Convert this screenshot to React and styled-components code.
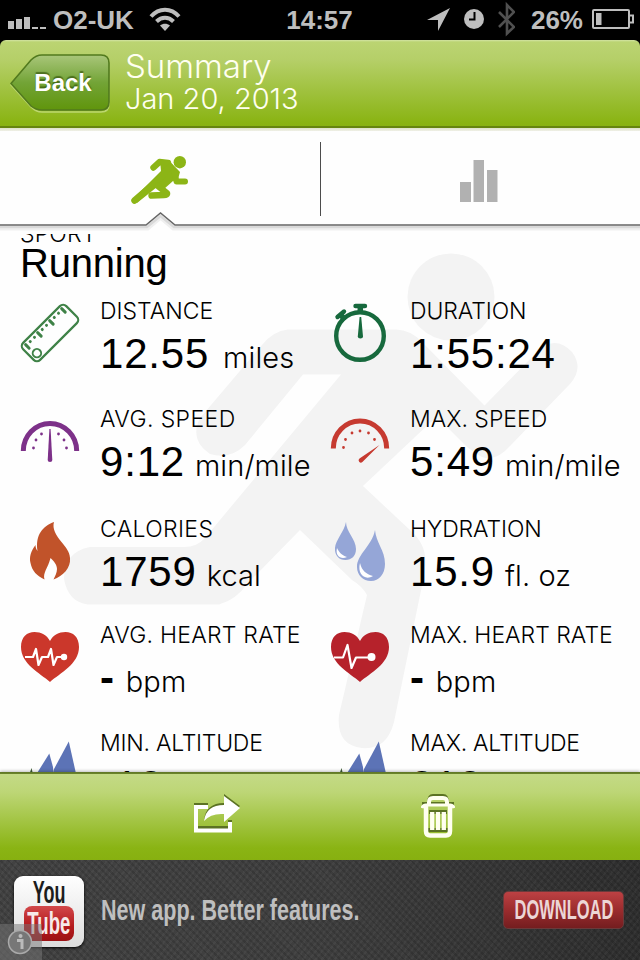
import React from 'react';
import styled, { createGlobalStyle } from 'styled-components';

const GlobalStyle = createGlobalStyle`
  * {
    box-sizing: border-box;
  }

  body {
    margin: 0;
    background: #000;
    font-family: 'Liberation Sans', Arial, sans-serif;
  }

  svg {
    display: block;
    flex: none;
  }
`;

const Screen = styled.div`
  width: 640px;
  height: 960px;
  display: flex;
  flex-direction: column;
  overflow: hidden;
  background: #000;
`;

/* Status bar */

const StatusBar = styled.div`
  height: 40px;
  flex: none;
  display: grid;
  grid-template-columns: 1fr 68px 1fr;
  padding: 0 6px 0 8px;
  color: #bebebe;
  font-size: 26px;
  font-weight: 700;
  line-height: 40px;
`;

const StatusGroup = styled.div`
  display: flex;
  align-items: center;
  white-space: nowrap;
  justify-content: ${(p) => (p.$end ? 'flex-end' : 'flex-start')};
`;

const Carrier = styled.span`
  margin: 0 15px 0 6px;
`;

const Clock = styled.span`
  margin-left: -3px;
  text-align: center;
`;

const Percent = styled.span`
  margin: 0 9px 0 16px;
`;

/* Header */

const Header = styled.header`
  height: 91px;
  flex: none;
  display: flex;
  padding: 14px 10px 0;
  border-radius: 6px 6px 0 0;
  background: linear-gradient(#d3e3a4 0, #bbd472 2px, #b5cf68 20px, #8ab414 82px, #89b213 86px, #66850f 86px, #66850f 88px, #dfe2cb 88px, #eff0e6 91px);
`;

const BackButton = styled.button`
  width: 100px;
  height: 59px;
  padding: 0;
  border: 0;
  background: none;
  display: grid;
  align-items: center;

  > * {
    grid-area: 1 / 1;
  }
`;

const BackLabel = styled.span`
  padding: 0 0 1px 6px;
  color: #fff;
  font: 700 24px 'Liberation Sans', Arial, sans-serif;
  text-shadow: 0 -2px 1px rgba(40, 70, 0, 0.6);
`;

const Heading = styled.div`
  margin-left: 15px;
  color: #fffff0;
  font-family: Inter, sans-serif;
  font-weight: 300;
  white-space: nowrap;
`;

const Title = styled.h1`
  margin: -5px 0 0;
  font-size: 33px;
  font-weight: 300;
  line-height: 34px;
`;

const DateLine = styled.div`
  font-size: 29px;
  line-height: 32px;
`;

/* Tabs */

const Tabs = styled.nav`
  position: relative;
  z-index: 1;
  height: 103px;
  flex: none;
  display: flex;
  background: #fefefe;
`;

const Tab = styled.div`
  flex: 1;
  display: flex;
  justify-content: center;
  padding-top: ${(p) => p.$top}px;
`;

const Divider = styled.div`
  width: 1px;
  height: 74px;
  margin: 11px 0 0;
  background: #4c4c4c;
`;

const TabEdge = styled.svg`
  position: absolute;
  left: 0;
  top: 78px;
`;

/* Summary */

const Content = styled.main`
  position: relative;
  height: 538px;
  flex: none;
  overflow: hidden;
  background: #fefefe;
  color: #000;
`;

const Watermark = styled.svg`
  position: absolute;
  left: 0;
  top: 0;
`;

const Scroller = styled.div`
  position: relative;
  margin-top: -9px;
`;

const Label = styled.div`
  font-family: Inter, sans-serif;
  font-size: 23px;
  font-weight: 300;
  line-height: 18px;
  letter-spacing: ${(p) => p.$track}px;
  white-space: nowrap;
`;

const Sport = styled.section`
  height: 77px;
  padding-left: 20px;
`;

const SportName = styled.div`
  margin-top: 8px;
  font-size: 40px;
  line-height: 24px;
  letter-spacing: -0.2px;
`;

const Metrics = styled.section`
  display: grid;
  grid-template-columns: 310px 310px;
  grid-template-rows: 108px 110px 106px 108px 108px;
  padding-left: 20px;
`;

const Metric = styled.div`
  display: grid;
  grid-template-columns: 60px 1fr;
  column-gap: 20px;
  align-content: start;
`;

const Value = styled.div`
  margin-top: 9px;
  font-size: 42px;
  font-weight: ${(p) => (p.$empty ? 700 : 400)};
  line-height: 50px;
  letter-spacing: 0.8px;
  white-space: nowrap;
`;

const Unit = styled.span`
  margin-left: ${(p) => p.$gap}px;
  font-family: Inter, sans-serif;
  font-size: 29px;
  font-weight: 300;
  line-height: 1;
  letter-spacing: 0.1px;
`;

/* Bottom */

const Toolbar = styled.footer`
  position: relative;
  height: 88px;
  flex: none;
  display: flex;
  padding-top: 21px;
  background: linear-gradient(#5f7526 0, #6c862b 2px, #c4da86 2px, #bdd676 20px, #8ab414 76px, #87b010 88px);
  box-shadow: 0 -1px 3px rgba(0, 0, 0, 0.25);
`;

const ToolButton = styled.div`
  padding-left: ${(p) => p.$left}px;
`;

const Banner = styled.aside`
  position: relative;
  flex: 1;
  display: flex;
  align-items: center;
  padding: 0 16px 0 14px;
  background:
    repeating-linear-gradient(45deg, rgba(0, 0, 0, 0.12) 0 2px, transparent 2px 5px),
    repeating-linear-gradient(-52deg, rgba(255, 255, 255, 0.035) 0 2px, transparent 2px 5px),
    linear-gradient(90deg, #424242, #3e3e3e 50%, #2e2e2e);
`;

const YouTube = styled.div`
  width: 70px;
  height: 71px;
  margin-top: 3px;
  display: flex;
  flex-direction: column;
  align-items: center;
  border-radius: 9px;
  background: linear-gradient(#fff, #dcdcdc);
  box-shadow: 0 1px 3px #000;
  color: #1c1c1c;
`;

const Narrow = styled.span`
  display: block;
  font-weight: 700;
  white-space: nowrap;
  font-size: ${(p) => p.$size}px;
  transform: scaleX(${(p) => p.$x});
  transform-origin: ${(p) => p.$origin || 'center'};
`;

const You = styled.div`
  height: 30px;
  line-height: 33px;
`;

const Tube = styled.div`
  width: 50px;
  height: 35px;
  border-radius: 8px;
  background: linear-gradient(#d2484a, #b3191c 60%, #9c1214);
  color: #f6e9e9;
  line-height: 35px;
  display: flex;
  justify-content: center;
`;

const AdText = styled.div`
  width: 402px;
  margin-left: 17px;
  color: #bfbfbf;
`;

const Download = styled.div`
  width: 121px;
  height: 38px;
  display: flex;
  align-items: center;
  justify-content: center;
  border: 1px solid #6b3a3b;
  border-radius: 5px;
  background: linear-gradient(#bd4143, #9b2c2e 50%, #741d1f);
  color: #ecd6d6;
`;

const InfoBadge = styled.div`
  position: absolute;
  left: 0;
  bottom: 0;
  width: 42px;
  height: 36px;
  display: flex;
  align-items: center;
  padding-left: 7px;
  background: rgba(120, 120, 120, 0.5);
`;

const RulerIcon = () => (
  <svg width="60" height="62" viewBox="0 0 60 62" fill="none" stroke="#3f8247">
    <g transform="translate(30 31) rotate(-45)">
      <rect x="-30.500" y="-12" width="61" height="24" rx="4.500" strokeWidth="2.200" />
      <path d="M-25.500 -9v5M-8.500 -9v5M8.500 -9v5M25.500 -9v5" strokeWidth="3" strokeLinecap="round" />
      <path d="M-20 -8v.1M-14 -8v.1M-3 -8v.1M3 -8v.1M14 -8v.1M20 -8v.1" strokeWidth="3" strokeLinecap="round" />
      <circle cx="-23.500" cy="5" r="4.200" strokeWidth="2" />
    </g>
  </svg>
);

const StopwatchIcon = () => (
  <svg width="60" height="62" viewBox="0 0 60 62" fill="none" stroke="#17693d">
    <circle cx="30" cy="34" r="23.800" strokeWidth="4.400" />
    <path d="M25.500 4h9.500M7.500 15L14 9.500" strokeWidth="4.400" strokeLinecap="round" />
    <path d="M30.300 5v6M11 13l4 5" strokeWidth="5.500" />
    <path d="M29.600 15h1.600L33 34.500a2.600 2 0 0 1-5.200 0z" fill="#17693d" stroke="none" />
  </svg>
);

const GaugeIcon = ({ color, y, max }) => (
  <svg width="60" height="62" viewBox="0 0 60 62">
    <g transform={`translate(30 ${y})`}>
      <path d="M-26.700 0a26.700 27.500 0 0 1 53.400 0" fill="none" stroke={color} strokeWidth="5" />
      <path
        d={
          max
            ? 'M-16.500 -1v.1M-14.500 -9v.1M-8 -15.500v.1M0 -17.500v.1M8.500 -15.500v.1M14.500 -9v.1'
            : 'M-16.500 -3v.1M-14 -11v.1M-8.500 -17v.1M8.500 -17v.1M14 -11v.1M16.500 -3v.1'
        }
        stroke={color}
        strokeWidth="2.800"
        strokeLinecap="round"
      />
      {max ? (
        <path d="M19.500 -3.500L-.5 10a2.300 2.300 0 0 0 2.900 3.600z" fill={color} />
      ) : (
        <path d="M-.6 -22h1.200L2.300 9a2.300 2 0 0 1-4.600 0z" fill={color} />
      )}
    </g>
  </svg>
);

const FlameIcon = () => (
  <svg width="60" height="62" viewBox="0 0 60 62">
    <path
      d="M34 2C23 6 15 15 17.500 31C16 29 15.500 27 15.500 25C11 31 9 37 10.500 43C12 51 17 56 24.500 59.500C22.500 53 28 48 30.500 38C34 41 37 45 37 49C37 53 35 56 33.500 59.500C43 56 51 48 50 38C49.500 31 46 28 41.500 22C36 15 32 9 34 2z"
      fill="#c1532a"
    />
  </svg>
);

const DropsIcon = () => (
  <svg width="60" height="62" viewBox="0 0 60 62">
    <path d="M16 2C16 12 26 19 26 29C26 36 21.500 40 15.500 40C9 40 4.500 35.500 5 28C5.500 20 14 12 16 2z" fill="#95a6d7" />
    <path d="M45 10C46 23 55 30 55 44C55 54 49 61 41 61C33 61 27 55 27 47C27 34 42 26 45 10z" fill="#95a6d7" />
    <path d="M7 28C9 32 11 35 17 37C11 40 5 36 7 28zM30 43C32 51 36 54 43 56C35 61 27 54 30 43z" fill="#fff" />
  </svg>
);

const HeartIcon = ({ color, max }) => (
  <svg width="60" height="62" viewBox="0 0 60 62">
    <path
      d="M30 56C20 47 1 38 1 21C1 11 7 6 14.500 6C21 6 27 9 30 15C33 9 39 6 45.500 6C53 6 59 11 59 21C59 38 40 47 30 56z"
      fill={color}
    />
    <path
      d={max ? 'M4 31.500H13L17.500 19L21.500 42L26 31.500H42' : 'M5 31H13L16 23L18.500 39L22 31H28L31 23L33.500 39L37 31H43'}
      fill="none"
      stroke="#fff"
      strokeWidth="2.200"
      strokeLinejoin="round"
    />
    <circle cx={max ? 41.5 : 44} cy="31" r={max ? 4 : 3.2} fill="#fff" />
  </svg>
);

const PeaksIcon = () => (
  <svg width="60" height="62" viewBox="0 0 60 62">
    <path d="M29.300 19.500L33 33L34 44H14z" fill="#5c73b6" />
    <path d="M48.800 7.500L57 44H32L34 35z" fill="#5c73b6" />
    <path d="M11.500 34L14 44H8z" fill="#3d5c35" />
  </svg>
);

const metrics = [
  { label: 'DISTANCE', track: 0, value: '12.55', unit: 'miles', gap: 14, icon: <RulerIcon /> },
  { label: 'DURATION', track: -0.1, value: '1:55:24', icon: <StopwatchIcon /> },
  { label: 'AVG. SPEED', track: 0.4, value: '9:12', unit: 'min/mile', gap: 10, icon: <GaugeIcon color="#7d3189" y={41} /> },
  { label: 'MAX. SPEED', track: 0, value: '5:49', unit: 'min/mile', gap: 10, icon: <GaugeIcon color="#c63a30" y={38.5} max /> },
  { label: 'CALORIES', track: 0.35, value: '1759', unit: 'kcal', gap: 10, icon: <FlameIcon /> },
  { label: 'HYDRATION', track: -0.1, value: '15.9', unit: 'fl. oz', gap: 10, icon: <DropsIcon /> },
  { label: 'AVG. HEART RATE', track: 0.25, value: '-', unit: 'bpm', gap: 11, icon: <HeartIcon color="#cb372b" /> },
  { label: 'MAX. HEART RATE', track: 0, value: '-', unit: 'bpm', gap: 11, icon: <HeartIcon color="#b6222b" max /> },
  { label: 'MIN. ALTITUDE', track: -0.25, value: '-12', icon: <PeaksIcon /> },
  { label: 'MAX. ALTITUDE', track: -0.25, value: '212', icon: <PeaksIcon /> },
];

const App = () => {
  return (
    <>
      <GlobalStyle />
      <Screen>
        <StatusBar>
          <StatusGroup>
            <svg width="39" height="40" viewBox="0 0 39 40" fill="#bebebe">
              <path d="M0 21h6v8H0zM8 19h6v10H8zM16 17h6v12h-6zM24 27h6v2h-6zM32 27h6v2h-6z" />
            </svg>
            <Carrier>O2-UK</Carrier>
            <svg width="32" height="40" viewBox="0 0 32 40" fill="none" stroke="#bebebe" strokeWidth="4">
              <path d="M2 16.500C10 7.500 22 7.500 30 16.500M7.500 21.500C12.500 16.500 19.500 16.500 24.500 21.500" />
              <path d="M16 31l-5-5.500c3-2.500 7-2.500 10 0z" fill="#bebebe" stroke="none" />
            </svg>
          </StatusGroup>
          <Clock>14:57</Clock>
          <StatusGroup $end>
            <svg width="89" height="40" viewBox="0 0 89 40">
              <path d="M24 8L12 31L12 20H1z" fill="#bebebe" />
              <circle cx="48" cy="19" r="10" fill="#bebebe" />
              <path d="M48.500 12v7.500H43" stroke="#000" strokeWidth="2" fill="none" />
              <path d="M73 12L88 27L81 33.500V5L88 12L73 27" stroke="#505050" strokeWidth="2.600" fill="none" />
            </svg>
            <Percent>26%</Percent>
            <svg width="42" height="40" viewBox="0 0 42 40" fill="none" stroke="#bebebe" strokeWidth="2">
              <rect x="1" y="10" width="36" height="18" rx="1" />
              <path d="M38 15.500h3v7h-3" />
              <path d="M4 13h5.500v12H4z" fill="#bebebe" stroke="none" />
            </svg>
          </StatusGroup>
        </StatusBar>

        <Header>
          <BackButton>
            <svg width="100" height="59" viewBox="0 0 100 59">
              <defs>
                <linearGradient id="back" x1="0" y1="0" x2="0" y2="1">
                  <stop offset="0" stopColor="#a9c67a" />
                  <stop offset="0.5" stopColor="#73a437" />
                  <stop offset="1" stopColor="#60950c" />
                </linearGradient>
              </defs>
              <path d="M1 31L21 7Q26 2 32 2H91Q99 2 99 10V50Q99 58 91 58H32Q26 58 21 53z" fill="none" stroke="#bcd66f" strokeWidth="1.500" />
              <path d="M1 29.500L21 6Q26 1 32 1H91Q99 1 99 9V48Q99 56 91 56H32Q26 56 21 52z" fill="url(#back)" stroke="#527a1e" strokeWidth="1.600" />
            </svg>
            <BackLabel>Back</BackLabel>
          </BackButton>
          <Heading>
            <Title>Summary</Title>
            <DateLine>Jan 20, 2013</DateLine>
          </Heading>
        </Header>

        <Tabs>
          <Tab $top={23}>
            <svg width="60" height="52" viewBox="0 0 60 52" fill="none" stroke="#8cb516" strokeLinecap="round" strokeLinejoin="round">
              <circle cx="49.800" cy="8.200" r="6.200" fill="#8cb516" stroke="none" />
              <path d="M23.500 13.500L29.500 8L38 9" strokeWidth="6.400" />
              <path d="M30 6L39 6.500L50 18L48 25L43 27L34 35L27 33L7 49L3 45L31 17z" fill="#8cb516" stroke="none" />
              <path d="M4.500 46.500L27 27L40 13" strokeWidth="6.500" />
              <path d="M44 18L46.500 27.500H55" strokeWidth="6" />
              <path d="M28 32L37 39.200Q37.500 41 34 41L21.500 41.500" strokeWidth="6.400" />
            </svg>
          </Tab>
          <Divider />
          <Tab $top={29}>
            <svg width="40" height="43" viewBox="0 0 40 43" fill="#b1b1b1">
              <path d="M0 22h11v20H0zM13.500 0h10.500v42H13.500zM27 10h10.500v32H27z" />
            </svg>
          </Tab>
          <TabEdge width="640" height="25" viewBox="0 0 640 25">
            <path d="M0 16H146L160.500 4L175 16H640V25H0z" fill="#fefefe" />
            <g fill="none" stroke="#000">
              <path d="M0 18H147L160.500 7L174 18H640" strokeOpacity="0.09" strokeWidth="2.500" />
              <path d="M0 19H147.500L160.500 8L173.500 19H640" strokeOpacity="0.06" strokeWidth="5" />
            </g>
            <path d="M0 16H146L160.500 4L175 16H640" fill="none" stroke="#666" strokeWidth="1.500" />
          </TabEdge>
        </Tabs>

        <Content>
          <Watermark width="640" height="538" viewBox="0 234 640 538" fill="#f3f3f3">
            <circle cx="451" cy="297" r="43.500" />
            <path
              fillRule="evenodd"
              d="M288 329.500H396Q411 330 422 342L484.500 405.500L539 350Q556 335 572 352Q584 368 570 384L510 446Q496 462 482 457Q472 452 463 443L444 424Q438 416 431 422L363 486L411 531Q428 546 425 568Q423 582 419 600L394 722Q387 750 362 748Q336 745 339 715L367 595Q362 586 352 580L300 530L248 583Q236 600 219 604.500H88Q68 602 64 579Q64 552 90 547H184Q197 547 205 538L341 374.500H303L245 445Q230 460 210 454Q189 440 200 418L262 345Q273 331 288 329.500z"
            />
          </Watermark>
          <Scroller>
            <Sport>
              <Label $track={0.2}>SPORT</Label>
              <SportName>Running</SportName>
            </Sport>
            <Metrics>
              {metrics.map((m) => (
                <Metric key={m.label}>
                  {m.icon}
                  <div>
                    <Label $track={m.track}>{m.label}</Label>
                    <Value $empty={m.value === '-'}>
                      {m.value}
                      {m.unit && <Unit $gap={m.gap}>{m.unit}</Unit>}
                    </Value>
                  </div>
                </Metric>
              ))}
            </Metrics>
          </Scroller>
        </Content>

        <Toolbar>
          <ToolButton $left={193}>
            <svg width="50" height="44" viewBox="0 0 50 44">
              <path d="M15 14H3V37H37V29" fill="none" stroke="#5b7223" strokeWidth="4" transform="translate(0 -2)" />
              <path d="M11 27Q13 10 31 10V1L47 13L31 27V19Q18 18 11 27z" fill="#5b7223" />
              <path d="M15 14H3V37.500H37V29" fill="none" stroke="#fff" strokeWidth="4" />
              <path d="M11 28Q13 12 31 12V3L47 15L31 29V21Q18 20 11 28z" fill="#fff" />
            </svg>
          </ToolButton>
          <ToolButton $left={178}>
            <svg width="34" height="46" viewBox="0 0 34 46" fill="none">
              <g stroke="#5b7223" strokeWidth="4">
                <path d="M8 10Q8 3 12 3H22Q26 3 26 10M1 11H33" />
                <path d="M6 37H28M8 19H26" />
              </g>
              <g stroke="#fffff0" strokeWidth="4">
                <path d="M8 12V9Q8 5 12 5H22Q26 5 26 9V12" />
                <path d="M1 15Q2 12 5 12H29Q32 12 33 15" strokeWidth="3" />
                <path d="M5 13V38Q5 42.500 9 42.500H25Q29 42.500 29 38V13" strokeWidth="4.500" />
                <path d="M11.200 19V37M17 19V37M22.800 19V37" strokeWidth="4.300" />
              </g>
            </svg>
          </ToolButton>
        </Toolbar>

        <Banner>
          <YouTube>
            <You>
              <Narrow $size={31} $x={0.58}>You</Narrow>
            </You>
            <Tube>
              <Narrow $size={31} $x={0.6}>Tube</Narrow>
            </Tube>
          </YouTube>
          <AdText>
            <Narrow $size={30} $x={0.718} $origin="left">New app. Better features.</Narrow>
          </AdText>
          <Download>
            <Narrow $size={27} $x={0.61}>DOWNLOAD</Narrow>
          </Download>
          <InfoBadge>
            <svg width="26" height="26" viewBox="0 0 26 26">
              <circle cx="13" cy="13" r="11.500" fill="#777" stroke="#aaa" strokeWidth="1.500" />
              <circle cx="13.500" cy="7" r="2" fill="#bbb" />
              <path d="M10 11.500H15V20" fill="none" stroke="#bbb" strokeWidth="3" />
            </svg>
          </InfoBadge>
        </Banner>
      </Screen>
    </>
  );
};

export default App;
